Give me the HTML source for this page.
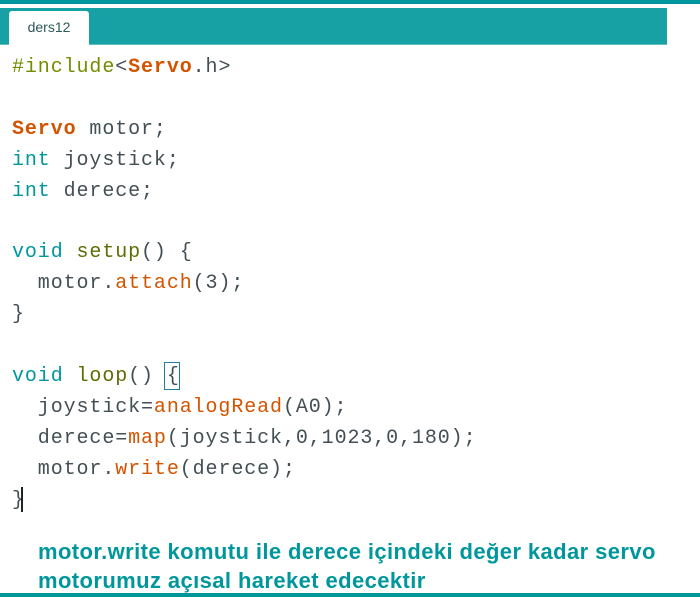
<!DOCTYPE html>
<html><head><meta charset="utf-8"><style>
html,body{margin:0;padding:0;background:#fff;width:700px;height:597px;overflow:hidden;position:relative}
.top{position:absolute;left:0;top:0;width:700px;height:4px;background:#00979c}
.strip{position:absolute;left:0;top:8px;width:667px;height:37px;background:#17a1a5;border-bottom:1px solid #5cc0c3;box-sizing:border-box}
.tab{position:absolute;left:9px;top:11px;width:80px;height:35px;background:#fff;border-radius:3px 3px 0 0;font:14px "Liberation Sans",sans-serif;color:#2d5a5c;text-align:center;line-height:32px}
.code{position:absolute;left:12px;top:53px;font-family:"Liberation Mono",monospace;font-size:20px;line-height:30.9px;color:#434f54;white-space:pre;letter-spacing:0.9px}
.k{color:#d35400;font-weight:bold}.t{color:#00979c}.o{color:#728e00}.f{color:#d35400}.l{color:#5e6d03}
.box{position:absolute;left:164px;top:362px;width:14px;height:26px;border:1px solid #1f7ea0}
.cur{position:absolute;left:21px;top:487px;width:2px;height:25px;background:#222}
.cap{position:absolute;left:38px;top:537px;font:bold 22px "Liberation Sans",sans-serif;color:#00979c;line-height:29px;letter-spacing:0.4px;white-space:nowrap}
.bot{position:absolute;left:0;top:593px;width:700px;height:4px;background:#00979c}
</style></head><body>
<div class="top"></div>
<div class="strip"></div>
<div class="tab">ders12</div>
<div class="code"><span class="o">#include</span>&lt;<span class="k">Servo</span>.h&gt;

<span class="k">Servo</span> motor;
<span class="t">int</span> joystick;
<span class="t">int</span> derece;

<span class="t">void</span> <span class="l">setup</span>() {
  motor.<span class="f">attach</span>(3);
}

<span class="t">void</span> <span class="l">loop</span>() {
  joystick=<span class="f">analogRead</span>(A0);
  derece=<span class="f">map</span>(joystick,0,1023,0,180);
  motor.<span class="f">write</span>(derece);
}</div>
<div class="box"></div>
<div class="cur"></div>
<div class="cap">motor.write komutu ile derece içindeki değer kadar servo<br>motorumuz açısal hareket edecektir</div>
<div class="bot"></div>
</body></html>
